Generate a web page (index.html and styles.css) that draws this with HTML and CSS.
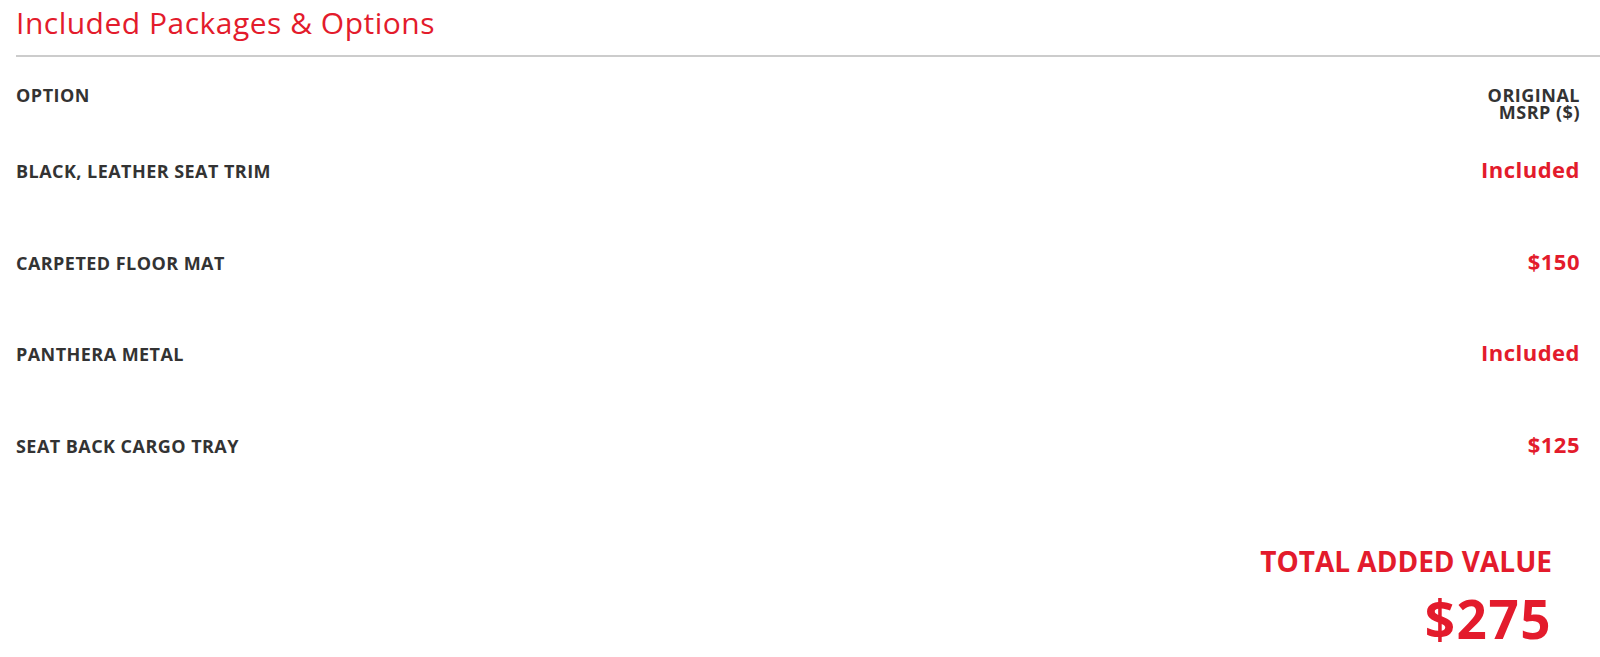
FILE: index.html
```html
<!DOCTYPE html>
<html lang="en">
<head>
    <meta charset="UTF-8">
    <meta name="viewport" content="width=device-width, initial-scale=1.0">
    <title>Included Packages &amp; Options</title>
    <link rel="stylesheet" href="styles.css">
</head>
<body>

<div class="packages">
    <h2 class="packages-title">Included Packages &amp; Options</h2>

    <table class="options-table">
        <thead>
            <tr>
                <th class="col-option">OPTION</th>
                <th class="col-msrp">ORIGINAL<br>MSRP ($)</th>
            </tr>
        </thead>
        <tbody>
            <tr>
                <td class="option-name">BLACK, LEATHER SEAT TRIM</td>
                <td class="option-price">Included</td>
            </tr>
            <tr>
                <td class="option-name">CARPETED FLOOR MAT</td>
                <td class="option-price">$150</td>
            </tr>
            <tr>
                <td class="option-name">PANTHERA METAL</td>
                <td class="option-price">Included</td>
            </tr>
            <tr>
                <td class="option-name">SEAT BACK CARGO TRAY</td>
                <td class="option-price">$125</td>
            </tr>
        </tbody>
    </table>

    <div class="total">
        <div class="total-label">TOTAL ADDED VALUE</div>
        <div class="total-value">$275</div>
    </div>
</div>

</body>
</html>
```

FILE: styles.css
```css
/* Halaman dasar */
body {
    font-family: 'Open Sans', 'Liberation Sans', sans-serif;
    margin: 0;
    background-color: #fff;
    color: #333;
}

.packages {
    padding: 0 20px 0 16px;
}

/* Judul dengan garis bawah abu-abu */
.packages-title {
    margin: 0 -20px 0 0;
    padding-top: 2px;
    padding-bottom: 12px;
    font-size: 30px;
    font-weight: 400;
    letter-spacing: 0.5px;
    line-height: 41px;
    color: #e31b2c;
    border-bottom: 2px solid #ccc;
}

.options-table {
    width: 100%;
    border-collapse: collapse;
    margin-top: 30px;
}

.options-table th {
    font-size: 18px;
    font-weight: 700;
    letter-spacing: 0.5px;
    line-height: 17px;
    padding: 0 0 36px;
    vertical-align: top;
}

.col-option {
    text-align: left;
}

.col-msrp {
    text-align: right;
}

.options-table td {
    vertical-align: baseline;
    padding: 0 0 64.5px;
}

.option-name {
    font-size: 18px;
    font-weight: 700;
    letter-spacing: 0.45px;
    line-height: 25px;
}

.option-price {
    font-size: 22px;
    font-weight: 700;
    letter-spacing: 0.5px;
    line-height: 25px;
    text-align: right;
    color: #e31b2c;
}

/* Total nilai tambahan */
.total {
    display: flex;
    flex-direction: column;
    align-items: flex-end;
    padding-right: 28px;
    margin-top: 19px;
}

.total-label {
    font-size: 28px;
    font-weight: 700;
    color: #e31b2c;
    line-height: 38px;
}

.total-value {
    margin-top: 9px;
    font-size: 53px;
    font-weight: 700;
    letter-spacing: 1.5px;
    color: #e31b2c;
    line-height: 60px;
}
```
